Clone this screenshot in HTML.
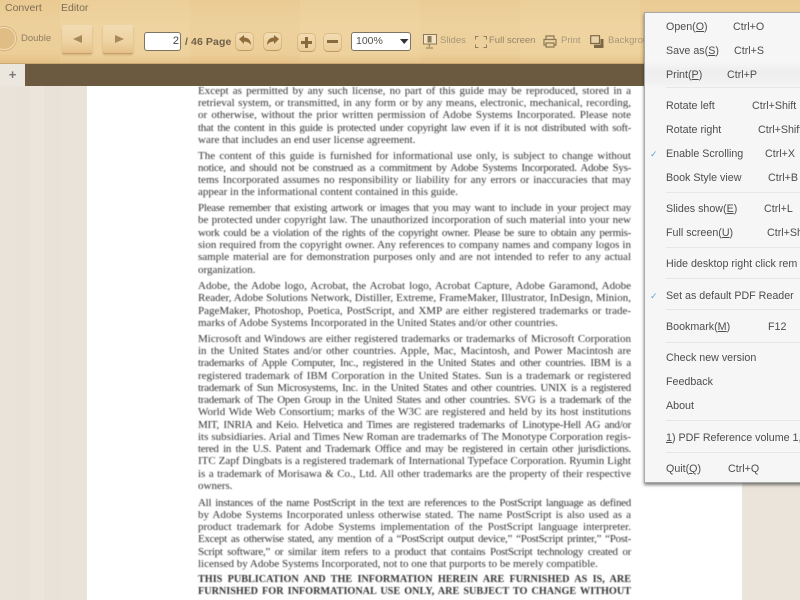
<!DOCTYPE html>
<html><head><meta charset="utf-8"><style>
html,body{margin:0;padding:0;width:800px;height:600px;overflow:hidden}
body{position:relative;background:#e9e3d9;font-family:"Liberation Sans",sans-serif}
.bar *{position:absolute}
#side{position:absolute;inset:86px 0 0 0;background:linear-gradient(90deg,#e9e3d9 0 17px,#e8e2d8 17px 30px,#ebe5dc 30px 44px,#e8e2d8 44px 62px,#e9e3d9 62px 87px,#eae4da 742px)}
#page{position:absolute;left:87px;top:86px;width:655px;height:514px;background:#fff}
.bar{position:absolute;left:0;top:0;width:800px;height:63px;background:linear-gradient(90deg,rgba(210,150,70,.05) 0 60px,rgba(255,235,190,.05) 60px 190px,rgba(210,150,70,.03) 190px 300px,rgba(255,235,190,.06) 300px 420px,rgba(210,150,70,.02) 420px 520px,rgba(255,235,190,.06) 520px 640px,rgba(210,150,70,.04) 640px),linear-gradient(#ebcd96,#eed3a0 45%,#edd09b 85%,#e6c389);border-bottom:1px solid #c9a873}
#brown{position:absolute;left:25px;top:64px;width:775px;height:22px;background:#6b5a40}
#tab{position:absolute;left:0;top:64px;width:25px;height:22px;background:#ebe6de;color:#777;font-size:13px;font-weight:bold;text-align:center;line-height:22px}
.t{color:#8d7c62;font-size:10px;white-space:nowrap;line-height:12px;filter:blur(.3px)}
.nav{width:30px;height:28px;top:25px;border-radius:2px;background:linear-gradient(#f2dcb4,#eed3a2 60%,#e5c088);box-shadow:0 1px 0 #c79e66,0 2px 2px rgba(120,80,30,.25)}
.sq{width:17px;height:17px;border-radius:4px;background:linear-gradient(#f3dcb2,#ebcd99);box-shadow:0 1px 0 #c09a63,0 0 0 1px rgba(190,150,95,.4)}
.box{background:#fff;border:1px solid #7f7461;border-radius:2px;box-sizing:border-box}
svg{position:absolute;overflow:visible}
#doc{position:absolute;left:0;top:1px;width:800px;height:599px;overflow:hidden;filter:blur(.4px)}
.l{position:absolute;left:198px;width:433px;height:12px;font:11px/12px "Liberation Serif",serif;color:#333;text-align:justify;text-align-last:justify}
.e{text-align-last:left}
.c{letter-spacing:-.28px}
.b{font-weight:bold;font-size:10.2px}
#menu{position:absolute;left:644px;top:12px;width:170px;height:471px;background:#f6f6f6;border:1px solid #a8a8a8;box-sizing:border-box;box-shadow:0 2px 3px rgba(0,0,0,.5)}
#hl{position:absolute;left:645px;top:62px;width:155px;height:25px;background:linear-gradient(#f6f6f6,#eeeeee 35%,#f1f1f1 85%,#f6f6f6)}
.m{position:absolute;left:666px;font-size:10.7px;line-height:14px;color:#4d4d4d;white-space:nowrap;filter:blur(.3px);transform:translateY(1px)}
.sep{position:absolute;left:666px;width:134px;height:1px;background:#e6e6e6}
.ck{position:absolute;left:650px;font-size:9px;line-height:12px;color:#5aa3d8;transform:translateY(1px)}
u{text-decoration:underline}
</style></head><body>
<div id="side"></div>
<div id="page"></div>
<div id="doc">
<div class="l" style="top:84px">Except as permitted by any such license, no part of this guide may be reproduced, stored in a</div>
<div class="l" style="top:96px">retrieval system, or transmitted, in any form or by any means, electronic, mechanical, recording,</div>
<div class="l" style="top:108px">or otherwise, without the prior written permission of Adobe Systems Incorporated. Please note</div>
<div class="l c" style="top:121px">that the content in this guide is protected under copyright law even if it is not distributed with soft-</div>
<div class="l e" style="top:133px">ware that includes an end user license agreement.</div>
<div class="l" style="top:149px">The content of this guide is furnished for informational use only, is subject to change without</div>
<div class="l c" style="top:161px">notice, and should not be construed as a commitment by Adobe Systems Incorporated. Adobe Sys-</div>
<div class="l" style="top:173px">tems Incorporated assumes no responsibility or liability for any errors or inaccuracies that may</div>
<div class="l e" style="top:185px">appear in the informational content contained in this guide.</div>
<div class="l c" style="top:201px">Please remember that existing artwork or images that you may want to include in your project may</div>
<div class="l" style="top:213px">be protected under copyright law. The unauthorized incorporation of such material into your new</div>
<div class="l c" style="top:226px">work could be a violation of the rights of the copyright owner. Please be sure to obtain any permis-</div>
<div class="l" style="top:238px">sion required from the copyright owner. Any references to company names and company logos in</div>
<div class="l" style="top:250px">sample material are for demonstration purposes only and are not intended to refer to any actual</div>
<div class="l e" style="top:263px">organization.</div>
<div class="l" style="top:279px">Adobe, the Adobe logo, Acrobat, the Acrobat logo, Acrobat Capture, Adobe Garamond, Adobe</div>
<div class="l" style="top:291px">Reader, Adobe Solutions Network, Distiller, Extreme, FrameMaker, Illustrator, InDesign, Minion,</div>
<div class="l" style="top:304px">PageMaker, Photoshop, Poetica, PostScript, and XMP are either registered trademarks or trade-</div>
<div class="l e" style="top:316px">marks of Adobe Systems Incorporated in the United States and/or other countries.</div>
<div class="l" style="top:332px">Microsoft and Windows are either registered trademarks or trademarks of Microsoft Corporation</div>
<div class="l" style="top:344px">in the United States and/or other countries. Apple, Mac, Macintosh, and Power Macintosh are</div>
<div class="l c" style="top:356px">trademarks of Apple Computer, Inc., registered in the United States and other countries. IBM is a</div>
<div class="l" style="top:369px">registered trademark of IBM Corporation in the United States. Sun is a trademark or registered</div>
<div class="l c" style="top:381px">trademark of Sun Microsystems, Inc. in the United States and other countries. UNIX is a registered</div>
<div class="l c" style="top:393px">trademark of The Open Group in the United States and other countries. SVG is a trademark of the</div>
<div class="l" style="top:405px">World Wide Web Consortium; marks of the W3C are registered and held by its host institutions</div>
<div class="l c" style="top:418px">MIT, INRIA and Keio. Helvetica and Times are registered trademarks of Linotype-Hell AG and/or</div>
<div class="l" style="top:430px">its subsidiaries. Arial and Times New Roman are trademarks of The Monotype Corporation regis-</div>
<div class="l c" style="top:442px">tered in the U.S. Patent and Trademark Office and may be registered in certain other jurisdictions.</div>
<div class="l" style="top:454px">ITC Zapf Dingbats is a registered trademark of International Typeface Corporation. Ryumin Light</div>
<div class="l" style="top:467px">is a trademark of Morisawa &amp; Co., Ltd. All other trademarks are the property of their respective</div>
<div class="l e" style="top:479px">owners.</div>
<div class="l c" style="top:496px">All instances of the name PostScript in the text are references to the PostScript language as defined</div>
<div class="l" style="top:508px">by Adobe Systems Incorporated unless otherwise stated. The name PostScript is also used as a</div>
<div class="l" style="top:520px">product trademark for Adobe Systems implementation of the PostScript language interpreter.</div>
<div class="l c" style="top:532px">Except as otherwise stated, any mention of a “PostScript output device,” “PostScript printer,” “Post-</div>
<div class="l c" style="top:545px">Script software,” or similar item refers to a product that contains PostScript technology created or</div>
<div class="l e" style="top:557px">licensed by Adobe Systems Incorporated, not to one that purports to be merely compatible.</div>
<div class="l b" style="top:573px">THIS PUBLICATION AND THE INFORMATION HEREIN ARE FURNISHED AS IS, ARE</div>
<div class="l b" style="top:585px">FURNISHED FOR INFORMATIONAL USE ONLY, ARE SUBJECT TO CHANGE WITHOUT</div>
</div>
<div id="brown"></div>
<div id="tab">+</div>
<div class="bar">
  <div class="t" style="left:5px;top:2px;font-size:10.5px;color:#7d6d55">Convert</div>
  <div class="t" style="left:61px;top:2px;font-size:10.5px;color:#7d6d55">Editor</div>
  <div style="left:-8px;top:27px;width:24px;height:23px;border-radius:12px;background:#e0bd85;border:1px solid #f4dfb8;box-sizing:border-box;box-shadow:0 0 0 1px #d5b27a"></div>
  <div class="t" style="left:21px;top:33px;font-size:9.5px">Double</div>
  <div class="nav" style="left:62px"></div>
  <svg style="left:73px;top:35px" width="10" height="8"><path d="M0 4L9 0V8Z" fill="#a9885a"/></svg>
  <div class="nav" style="left:103px"></div>
  <svg style="left:115px;top:35px" width="10" height="8"><path d="M9 4L0 0V8Z" fill="#a9885a"/></svg>
  <div class="box" style="left:144px;top:32px;width:37px;height:19px;color:#444;font-size:11px;line-height:17px;text-align:right;padding-right:1px;border-radius:3px">2</div>
  <div class="t" style="left:185px;top:36px;font-size:10.5px;font-weight:bold;color:#6e6048;letter-spacing:.1px">/ 46 Page</div>
  <div class="sq" style="left:236px;top:33px"></div>
  <svg style="left:238px;top:35px" width="14" height="12"><path d="M1 4L6 0V2.5C10 2.5 13 5 13 10C11 7.500 9 6.500 6 6.500V9Z" fill="#8f6c3a"/></svg>
  <div class="sq" style="left:264px;top:33px"></div>
  <svg style="left:266px;top:35px" width="14" height="12"><path d="M13 4L8 0V2.5C4 2.500 1 5 1 10C3 7.500 5 6.500 8 6.500V9Z" fill="#8f6c3a"/></svg>
  <div class="sq" style="left:298px;top:34px"></div>
  <svg style="left:301px;top:37px" width="11" height="11"><path d="M4 0H7V4H11V7H7V11H4V7H0V4H4Z" fill="#8a6a3c"/></svg>
  <div class="sq" style="left:324px;top:34px"></div>
  <svg style="left:327px;top:40px" width="11" height="3"><path d="M0 0H11V3H0Z" fill="#8a6a3c"/></svg>
  <div class="box" style="left:351px;top:32px;width:60px;height:19px;color:#55504a;font-size:10.5px;line-height:17px;padding-left:4px;border-radius:3px">100%</div>
  <svg style="left:400px;top:39px" width="9" height="5"><path d="M0 0H8.500L4.200 5Z" fill="#333"/></svg>
  <svg style="left:423px;top:34px" width="14" height="15"><path d="M.5.500H13.500V10H.5Z" fill="#f4e3c4" stroke="#8a7858"/><path d="M5 2.500H8V8H5ZM6.300 10V13M3 14H10" fill="#8f7a58" stroke="#8a7858"/></svg>
  <div class="t" style="left:440px;top:35px;font-size:9.5px;color:#a9977a">Slides</div>
  <svg style="left:475px;top:36px" width="12" height="12" fill="#8f7e62"><path d="M0 0H3.500V1H1V3.500H0ZM8.500 0H12V3.500H11V1H8.500ZM0 8.500H1V11H3.500V12H0ZM12 8.500V12H8.500V11H11V8.500Z"/></svg>
  <div class="t" style="left:489px;top:35px;font-size:9.5px;color:#96856a">Full screen</div>
  <svg style="left:543px;top:35px" width="14" height="13" fill="none" stroke="#8a7858" stroke-width="1.200"><path d="M3 4V1H11V4M3 10H1V4.500H13V10H11M3 8H11V12H3Z"/></svg>
  <div class="t" style="left:561px;top:35px;font-size:9.5px;color:#a9977a">Print</div>
  <svg style="left:590px;top:35px" width="14" height="13"><path d="M.7.700H9.500V8.500H.7Z" fill="#e9d3a9" stroke="#7a6849" stroke-width="1.200"/><path d="M10.500 4H13.500V13H4V9.800H10.500Z" fill="#7a6849"/></svg>
  <div class="t" style="left:608px;top:35px;font-size:9.5px;color:#a9977a">Background</div>
</div>
<div id="menu"></div>
<div id="hl"></div>
<div class="m" style="top:19px">Open(<u>O</u>)</div><div class="m" style="left:733px;top:19px">Ctrl+O</div>
<div class="m" style="top:43px">Save as(<u>S</u>)</div><div class="m" style="left:734px;top:43px">Ctrl+S</div>
<div class="m" style="top:67px">Print(<u>P</u>)</div><div class="m" style="left:727px;top:67px">Ctrl+P</div>
<div class="sep" style="top:87px"></div>
<div class="m" style="top:98px">Rotate left</div><div class="m" style="left:752px;top:98px">Ctrl+Shift</div>
<div class="m" style="top:122px">Rotate right</div><div class="m" style="left:758px;top:122px">Ctrl+Shift</div>
<div class="ck" style="top:147px">✓</div>
<div class="m" style="top:146px">Enable Scrolling</div><div class="m" style="left:765px;top:146px">Ctrl+X</div>
<div class="m" style="top:170px">Book Style view</div><div class="m" style="left:768px;top:170px">Ctrl+B</div>
<div class="sep" style="top:192px"></div>
<div class="m" style="top:201px">Slides show(<u>E</u>)</div><div class="m" style="left:764px;top:201px">Ctrl+L</div>
<div class="m" style="top:225px">Full screen(<u>U</u>)</div><div class="m" style="left:767px;top:225px">Ctrl+Shift</div>
<div class="sep" style="top:247px"></div>
<div class="m" style="top:256px">Hide desktop right click rem</div>
<div class="sep" style="top:278px"></div>
<div class="ck" style="top:289px">✓</div>
<div class="m" style="top:288px">Set as default PDF Reader</div>
<div class="sep" style="top:309px"></div>
<div class="m" style="top:319px">Bookmark(<u>M</u>)</div><div class="m" style="left:768px;top:319px">F12</div>
<div class="sep" style="top:342px"></div>
<div class="m" style="top:350px">Check new version</div>
<div class="m" style="top:374px">Feedback</div>
<div class="m" style="top:398px">About</div>
<div class="sep" style="top:420px"></div>
<div class="m" style="top:430px"><u>1</u>) PDF Reference volume 1,</div>
<div class="sep" style="top:452px"></div>
<div class="m" style="top:461px">Quit(<u>Q</u>)</div><div class="m" style="left:728px;top:461px">Ctrl+Q</div>
</body></html>
